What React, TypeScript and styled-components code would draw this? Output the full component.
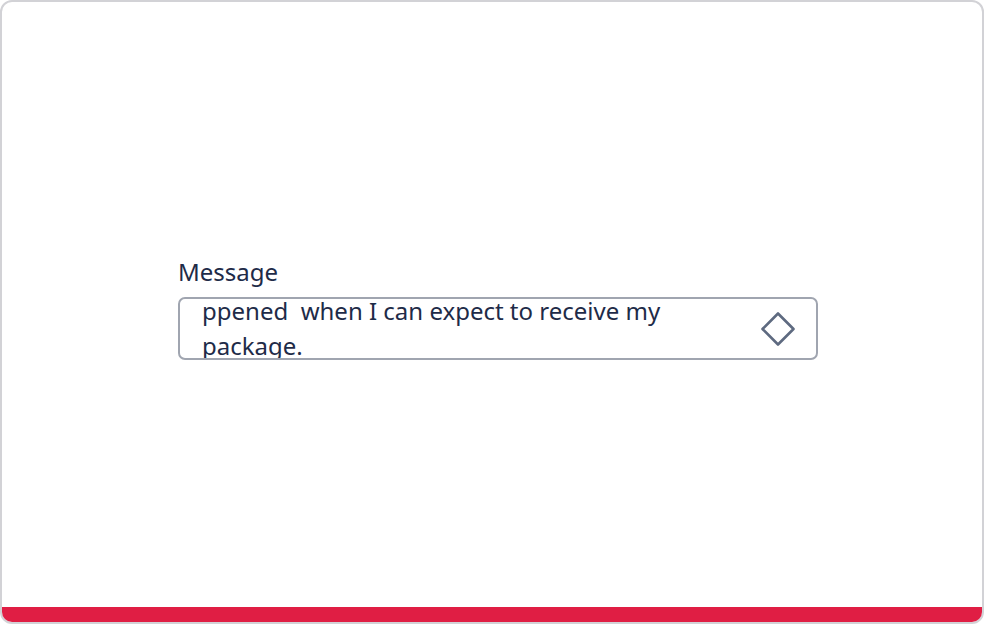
import * as React from 'react';
import styled, { createGlobalStyle } from 'styled-components';

const GlobalStyle = createGlobalStyle`
    html, body {
        margin: 0;
        padding: 0;
        background: #ffffff;
        font-family: "Noto Sans", "Open Sans", sans-serif;
    }
`

const Card = styled.div`
    box-sizing: border-box;
    width: 984px;
    height: 624px;
    border: 2px solid #d2d2d6;
    border-radius: 12px;
    overflow: hidden;
    display: flex;
    flex-direction: column;
    background: #ffffff;
`

const Body = styled.main`
    flex: 1;
    display: flex;
    align-items: center;
    justify-content: center;
    padding: 7px 0 0 12px;
`

const Field = styled.div`
    display: flex;
    flex-direction: column;
    gap: 9px;
    width: 640px;
`

const Label = styled.label`
    font-size: 24px;
    line-height: 32px;
    color: #1e2b48;
`

const Box = styled.div`
    box-sizing: border-box;
    height: 63px;
    flex-shrink: 0;
    border: 2px solid #a0a5b0;
    border-radius: 7px;
    display: flex;
    align-items: center;
    justify-content: space-between;
    padding: 0 20px 0 22px;
    overflow: hidden;
`

// the message has been scrolled a little, so its lines are cut at the edges
const Scroll = styled.div`
    align-self: stretch;
    overflow: hidden;
    width: 530px;
`

const Text = styled.div`
    margin-top: -6px;
    font-size: 24px;
    line-height: 35px;
    color: #1e2b48;
    white-space: pre-wrap;
`

const Footer = styled.div`
    height: 15px;
    flex-shrink: 0;
    background: #e01e44;
`

const Diamond = () => (
    <svg width="36" height="36" viewBox="0 0 36 36" fill="none">
        <path
            d="M18 2.5 L33.5 18 L18 33.5 L2.5 18 Z"
            stroke="#5e6a80"
            strokeWidth="2.6"
            strokeLinejoin="round"
        />
    </svg>
)

export default function App() {
    return (
        <>
            <GlobalStyle />
            <Card>
                <Body>
                    <Field>
                        <Label>Message</Label>
                        <Box>
                            <Scroll>
                                <Text>{'ppened  when I can expect to receive my package.'}</Text>
                            </Scroll>
                            <Diamond />
                        </Box>
                    </Field>
                </Body>
                <Footer />
            </Card>
        </>
    )
}
